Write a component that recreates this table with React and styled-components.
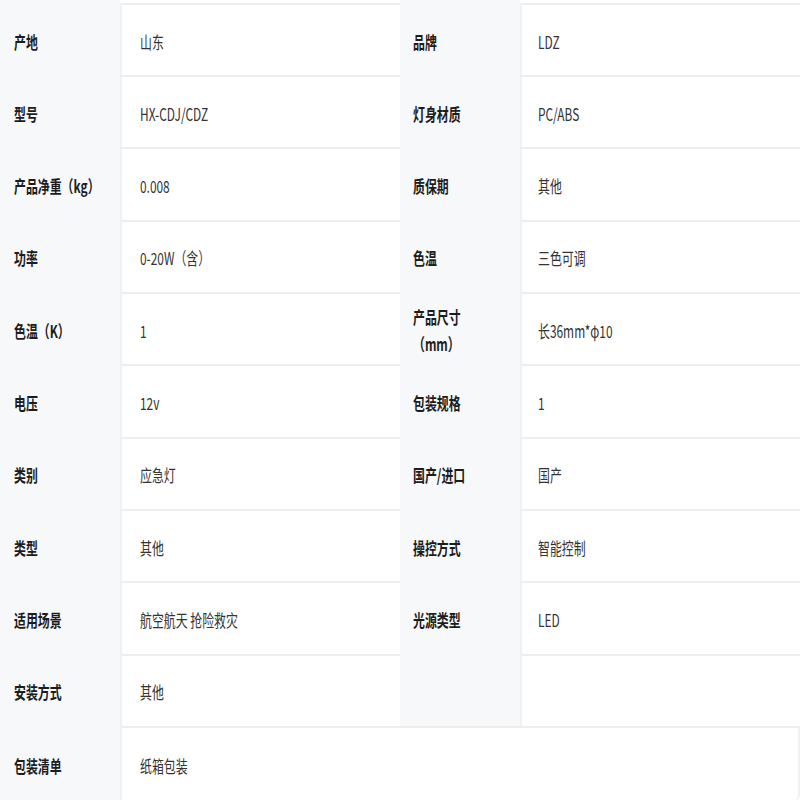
import React from "react";
import styled, { createGlobalStyle } from "styled-components";

const Global = createGlobalStyle`
  html, body { margin: 0; padding: 0; background: #ffffff; }
  body { font-family: "Noto Sans CJK SC", "Noto Sans", "Liberation Sans", sans-serif; }
`;

const Table = styled.div`
  display: grid;
  grid-template-columns: 120px 280px 120px 280px;
  grid-template-rows: 75px repeat(9, 72.33px) 76px;
  width: 800px;
  overflow: hidden;
`;

const Label = styled.div`
  background: #f7f8fa;
  display: flex;
  align-items: center;
  padding: ${(p) => (p.$first ? "7px" : "4px")} 0 0 ${(p) => (p.$right ? "13px" : "14px")};
  color: #1c1c1c;
  font-weight: 700;
`;

const Value = styled.div`
  background: #ffffff;
  border-top: 2px solid #eeeeee;
  border-left: 2px solid #f1f1f1;
  margin-top: ${(p) => (p.$first ? "3px" : "0")};
  display: flex;
  align-items: center;
  padding: 2px 0 0 ${(p) => (p.$right ? "16px" : "18px")};
  color: #333333;
  font-weight: 400;
  grid-column: ${(p) => (p.$span ? "span 3" : "auto")};
  ${(p) =>
    p.$span
      ? "border-right: 2px solid #f1f1f1; border-bottom-right-radius: 8px;"
      : ""}
`;

const Text = styled.span`
  display: inline-block;
  font-size: 17px;
  line-height: 27px;
  transform: scaleX(0.7);
  transform-origin: left center;
  white-space: nowrap;
`;

const rows = [
  ["产地", "山东", "品牌", "LDZ"],
  ["型号", "HX-CDJ/CDZ", "灯身材质", "PC/ABS"],
  ["产品净重（kg）", "0.008", "质保期", "其他"],
  ["功率", "0-20W（含）", "色温", "三色可调"],
  ["色温（K）", "1", ["产品尺寸", "（mm）"], "长36mm*φ10"],
  ["电压", "12v", "包装规格", "1"],
  ["类别", "应急灯", "国产/进口", "国产"],
  ["类型", "其他", "操控方式", "智能控制"],
  ["适用场景", "航空航天 抢险救灾", "光源类型", "LED"],
  ["安装方式", "其他", "", ""],
];

const renderText = (t) =>
  Array.isArray(t) ? (
    <Text>
      {t[0]}
      <br />
      {t[1]}
    </Text>
  ) : (
    <Text>{t}</Text>
  );

export default function App() {
  return (
    <>
      <Global />
      <Table>
        {rows.map((r, i) => (
          <React.Fragment key={i}>
            <Label $first={i === 0}>{renderText(r[0])}</Label>
            <Value $first={i === 0}>{renderText(r[1])}</Value>
            <Label $first={i === 0} $right>
              {renderText(r[2])}
            </Label>
            <Value $first={i === 0} $right>
              {renderText(r[3])}
            </Value>
          </React.Fragment>
        ))}
        <Label>{renderText("包装清单")}</Label>
        <Value $span>{renderText("纸箱包装")}</Value>
      </Table>
    </>
  );
}
